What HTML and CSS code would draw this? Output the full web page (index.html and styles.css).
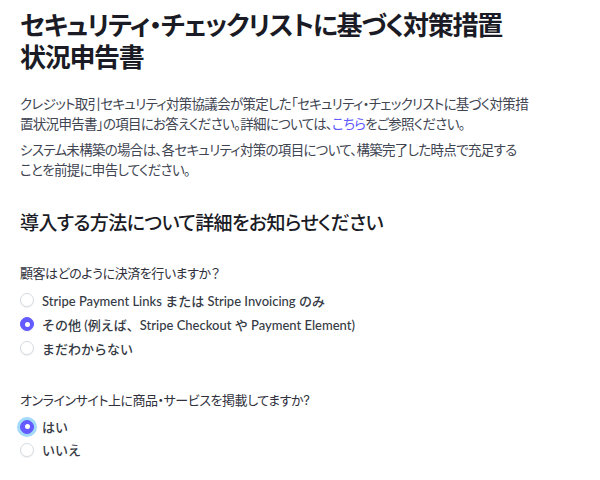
FILE: index.html
```html
<!DOCTYPE html>
<html lang="ja">
<head>
  <meta charset="UTF-8" />
  <meta name="viewport" content="width=device-width, initial-scale=1" />
  <title>セキュリティ・チェックリスト</title>
  <link rel="stylesheet" href="styles.css">
</head>
<body>
  <div class="page">
    <h1 class="title">セキュリティ・チェックリストに基づく対策措置<br>状況申告書</h1>

    <p class="lead">クレジット取引セキュリティ対策協議会が策定した「セキュリティ・チェックリストに基づく対策措<br>置状況申告書」の項目にお答えください。詳細については、<a href="#" class="link">こちら</a>をご参照ください。</p>
    <p class="lead">システム未構築の場合は、各セキュリティ対策の項目について、構築完了した時点で充足する<br>ことを前提に申告してください。</p>

    <h2 class="section">導入する方法について詳細をお知らせください</h2>

    <!-- 質問1 -->
    <fieldset class="question">
      <legend class="q-label">顧客はどのように決済を行いますか？</legend>
      <label class="option"><span class="radio"></span>Stripe Payment Links または Stripe Invoicing のみ</label>
      <label class="option"><span class="radio checked"></span>その他 (例えば、Stripe Checkout や Payment Element)</label>
      <label class="option"><span class="radio"></span>まだわからない</label>
    </fieldset>

    <!-- 質問2 -->
    <fieldset class="question">
      <legend class="q-label">オンラインサイト上に商品・サービスを掲載してますか?</legend>
      <label class="option"><span class="radio checked focus"></span>はい</label>
      <label class="option"><span class="radio"></span>いいえ</label>
    </fieldset>
  </div>
</body>
</html>
```

FILE: styles.css
```css
* { box-sizing: border-box; margin: 0; padding: 0; }

body {
  font-family: Inter, "Noto Sans CJK JP", sans-serif;
  font-feature-settings: "palt";
  background: #fff;
  color: #414552;
}

.page {
  width: 560px;
  padding: 10px 0 0 20px;
}

.title {
  font-size: 26px;
  line-height: 32px;
  font-weight: 600;
  color: #1a1b25;
  letter-spacing: -1.3px;
}

.lead {
  font-size: 13.5px;
  line-height: 20px;
  letter-spacing: -0.7px;
  margin-top: 20px;
}

.lead + .lead { margin-top: 6px; }

.link {
  color: #635bff;
  text-decoration: none;
}

.section {
  font-size: 19px;
  line-height: 28px;
  font-weight: 500;
  color: #1a1b25;
  letter-spacing: -0.6px;
  margin-top: 30px;
}

.question {
  border: none;
  margin-top: 25px;
  display: flex;
  flex-direction: column;
}

.question + .question { margin-top: 30px; }

.q-label {
  font-size: 13px;
  line-height: 20px;
  letter-spacing: -0.45px;
  color: #30313d;
  margin-bottom: 5px;
}

.option {
  display: flex;
  align-items: center;
  gap: 8px;
  height: 24px;
  font-family: Lato, "Noto Sans CJK JP", sans-serif;
  font-feature-settings: normal;
  font-size: 13px;
  font-weight: 500;
  color: #353a44;
}

.question + .question .option { height: 23px; }

.radio {
  width: 14px;
  height: 14px;
  border-radius: 50%;
  border: 1px solid #d5dbe1;
  background: #fff;
  box-shadow: 0 1px 1px rgba(0,0,0,0.06);
  flex-shrink: 0;
  display: flex;
  align-items: center;
  justify-content: center;
}

.radio.checked {
  background: #635bff;
  border-color: #635bff;
}

.radio.checked::after {
  content: "";
  width: 5px;
  height: 5px;
  border-radius: 50%;
  background: #fff;
}

.radio.focus {
  box-shadow: 0 0 0 3px rgba(1, 150, 237, 0.36);
}
```
